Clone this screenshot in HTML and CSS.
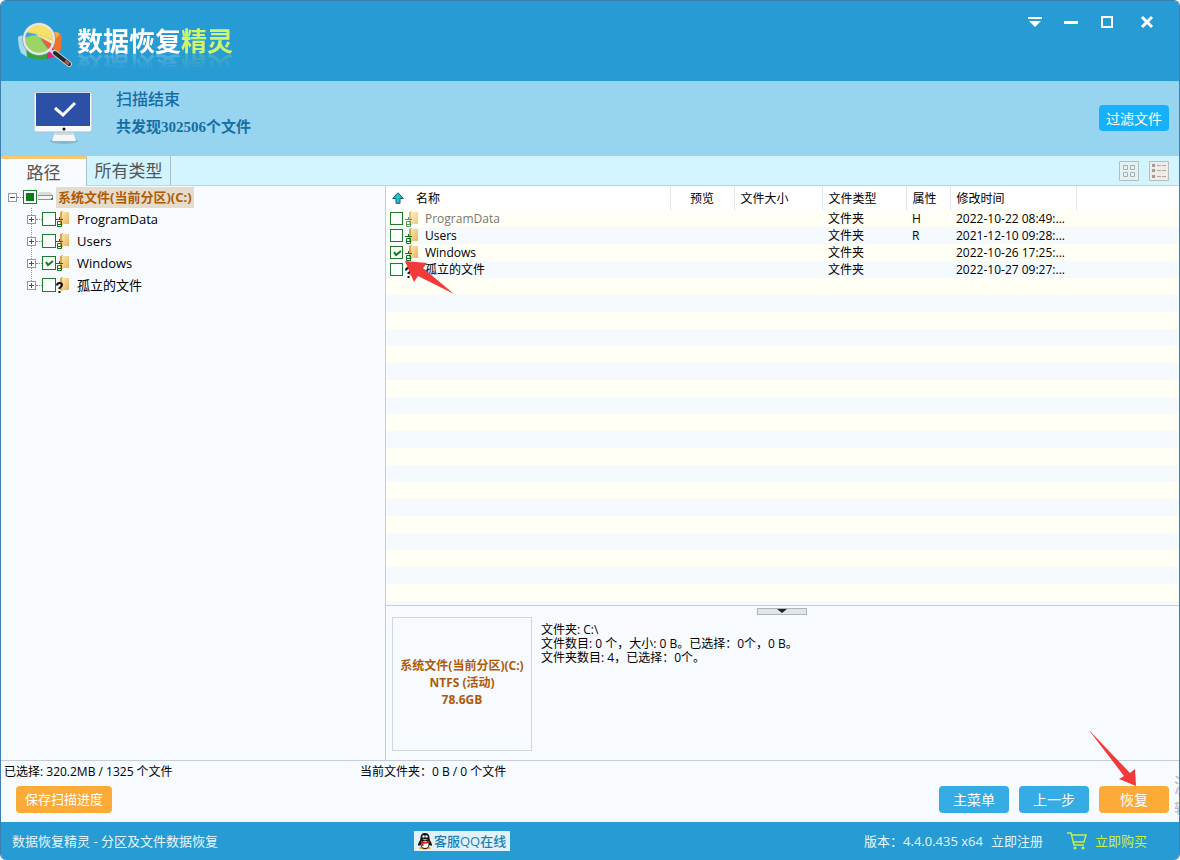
FILE: index.html
```html
<!DOCTYPE html>
<html lang="zh-CN">
<head>
<meta charset="utf-8">
<title>数据恢复精灵</title>
<link rel="stylesheet" href="styles.css">
</head>
<body>
<svg class="defs" aria-hidden="true">
  <defs>
    <linearGradient id="fold" x1="0" y1="0" x2="1" y2="1"><stop offset="0" stop-color="#fbe6b0"/><stop offset="1" stop-color="#e9b45c"/></linearGradient>
    <symbol id="folder-bin" viewBox="0 0 16 18">
      <path d="M4 2l3-1v14l-3-1z" fill="#d9a648"/><path d="M6 2h7v12H6z" fill="url(#fold)"/>
      <path d="M0 9.500h7M3.500 7v2M1.500 11.500h4v5h-4zM2 14.500h3" fill="none" stroke="#0c7420"/>
    </symbol>
    <symbol id="folder-unknown" viewBox="0 0 16 18">
      <path d="M4 2l3-1v14l-3-1z" fill="#d9a648"/><path d="M6 2h7v12H6z" fill="url(#fold)"/>
      <path d="M1 9.500q0-2.500 2.500-2.500t2.500 2q0 1.500-2.500 3v1" fill="none" stroke="#111" stroke-width="2"/><path d="M2.500 15h2v2h-2z" fill="#111"/>
    </symbol>
  </defs>
</svg>
<div class="window">
  <header class="titlebar">
    <div class="brand">
      <svg class="brand-icon" width="58" height="50" viewBox="0 0 58 50" aria-hidden="true">
        <path d="M2 17q1 12 5 17 9 7 22 5 12-2 15-8V22z" fill="#35a53a"/>
        <path d="M2 17q0 9 3 16l6 4-2-20q-4-3-7 0z" fill="#a9d9ee"/>
        <path d="M44 14l2 2-1 14-7 6-5-14z" fill="#ef7424"/>
        <path d="M44 14l-8 9-2-11q8-1 10 2z" fill="#f7a545"/>
        <path d="M31 26v13l9-3-3-8z" fill="#e2267d"/>
        <path d="M10 12q7-9 17-7 9 3 10 15L20 14z" fill="#f7dc51"/>
        <path d="M9 18q6-3 12-3l12 15-3 3q-12 4-18-3z" fill="#8fcf50"/>
        <path d="M20 14l16 6 1 3-4 4z" fill="#f6e98b"/>
        <path d="M24 17l12 7-3 6z" fill="#e34a33"/>
        <circle cx="23" cy="19" r="15" fill="#fff" fill-opacity=".12" stroke="#e4e8ea" stroke-width="2.500"/>
        <circle cx="23" cy="19" r="16.500" fill="none" stroke="#7a919d" stroke-width=".6"/>
        <path d="M34 30l5 4" stroke="#d6d6d6" stroke-width="3"/>
        <path d="M39 33l14 11" stroke="#c9cdd0" stroke-width="6" stroke-linecap="round"/>
        <path d="M39 33l14 11" stroke="#26272a" stroke-width="4" stroke-linecap="round"/>
        <path d="M49 41l4 3" stroke="#a05b42" stroke-width="3"/>
      </svg>
      <h1 class="brand-name">数据恢复<span class="brand-accent">精灵</span></h1>
    </div>
    <div class="window-controls">
      <button type="button" aria-label="菜单"><svg width="16" height="16" viewBox="0 0 16 16"><path d="M1 3h14v2H1zM2 7h12l-6 6z" fill="#fff"/></svg></button>
      <button type="button" aria-label="最小化"><svg width="16" height="16" viewBox="0 0 16 16"><path d="M1 7h14v3H1z" fill="#fff"/></svg></button>
      <button type="button" aria-label="最大化"><svg width="16" height="16" viewBox="0 0 16 16"><path d="M3 3h10v10H3z" fill="none" stroke="#fff" stroke-width="2"/></svg></button>
      <button type="button" class="close" aria-label="关闭"><svg width="16" height="16" viewBox="0 0 16 16"><path d="M3 3l10 10M13 3L3 13" stroke="#fff" stroke-width="3"/></svg></button>
    </div>
  </header>

  <section class="banner">
    <svg class="monitor" width="60" height="54" viewBox="0 0 60 54" aria-hidden="true">
      <ellipse cx="31" cy="50" rx="14" ry="3" fill="#7fb9d6"/>
      <path d="M22 41h18l3 9H19z" fill="#f7f7f8"/><path d="M22 41h18l1 3H21z" fill="#d4d8de"/>
      <rect x="1" y="1" width="58" height="40" rx="2" fill="#f6f8fa" stroke="#a9c0d4"/>
      <path d="M3 2h54v33H3z" fill="#2b50a5"/>
      <path d="M22 17l8 7 12-12" fill="none" stroke="#fff" stroke-width="3"/>
      <circle cx="31" cy="38" r="1.500" fill="#111"/>
    </svg>
    <div class="banner-text">
      <p class="banner-title">扫描结束</p>
      <p class="banner-count">共发现302506个文件</p>
    </div>
    <button type="button" class="btn btn-filter">过滤文件</button>
  </section>

  <nav class="tabs">
    <button type="button" class="tab tab-active">路径</button>
    <button type="button" class="tab">所有类型</button>
    <div class="view-modes">
      <button type="button" aria-label="图标视图"><svg width="20" height="20" viewBox="0 0 20 20"><path d="M.5.5h19v19H.5z" fill="#e4f1f2" stroke="#aebfc2"/><path d="M4.500 4.500h4v4h-4zM11.500 4.500h4v4h-4zM4.500 11.500h4v4h-4zM11.500 11.500h4v4h-4z" fill="none" stroke="#a3b1b3"/></svg></button>
      <button type="button" aria-label="列表视图"><svg width="20" height="20" viewBox="0 0 20 20"><path d="M.5.5h19v19H.5z" fill="#eeebe9" stroke="#b8bcbc"/><path d="M3 3h3v3H3zM3 8h3v3H3zM3 14h3v3H3z" fill="#a39b96"/><path d="M8 4.500h9M8 9.500h9M8 15.500h9" stroke="#b5a59d" stroke-dasharray="4 1"/></svg></button>
    </div>
  </nav>

  <main class="workspace">
    <aside class="tree">
      <div class="tree-root">
        <button type="button" class="toggle toggle-open" aria-label="折叠"></button>
        <span class="dots"></span>
        <input type="checkbox" class="check check-partial" id="t0">
        <svg class="drive" width="17" height="14" viewBox="0 0 17 14" aria-hidden="true"><path d="M3 2h10l3 3H1z" fill="#d9dcdc"/><path d="M1 5h15v5H1z" fill="#8d9292"/><path d="M1 6h14v3H1z" fill="#f3f4f4"/><path d="M14 8h2v2h-2z" fill="#279436"/></svg>
        <label for="t0" class="root-label">系统文件(当前分区)(C:)</label>
      </div>
      <ul class="tree-list">
        <li><button type="button" class="toggle" aria-label="展开"></button><span class="dots"></span><input type="checkbox" class="check" id="t1"><svg class="folder" width="16" height="18"><use href="#folder-bin"/></svg><label for="t1">ProgramData</label></li>
        <li><button type="button" class="toggle" aria-label="展开"></button><span class="dots"></span><input type="checkbox" class="check" id="t2"><svg class="folder" width="16" height="18"><use href="#folder-bin"/></svg><label for="t2">Users</label></li>
        <li><button type="button" class="toggle" aria-label="展开"></button><span class="dots"></span><input type="checkbox" class="check" id="t3" checked><svg class="folder" width="16" height="18"><use href="#folder-bin"/></svg><label for="t3">Windows</label></li>
        <li><button type="button" class="toggle" aria-label="展开"></button><span class="dots"></span><input type="checkbox" class="check" id="t4"><svg class="folder" width="16" height="18"><use href="#folder-unknown"/></svg><label for="t4">孤立的文件</label></li>
      </ul>
    </aside>

    <section class="content">
      <div class="files">
        <table class="file-table">
          <colgroup><col><col class="c-preview"><col class="c-size"><col class="c-type"><col class="c-attr"><col class="c-date"><col class="c-rest"></colgroup>
          <thead>
            <tr>
              <th><span class="name-head"><svg width="12" height="12" viewBox="0 0 12 12" aria-hidden="true"><path d="M6 .8L11.300 6.500H8v4.800H4V6.500H.7z" fill="#27c0cf" stroke="#125b78"/></svg>名称</span></th>
              <th class="center">预览</th><th>文件大小</th><th>文件类型</th><th>属性</th><th>修改时间</th><th class="last"></th>
            </tr>
          </thead>
          <tbody>
            <tr><td><span class="name"><input type="checkbox" class="check" id="f1"><svg class="faded" width="16" height="18"><use href="#folder-bin"/></svg><label for="f1" class="hidden-file">ProgramData</label></span></td><td></td><td></td><td>文件夹</td><td>H</td><td>2022-10-22 08:49:...</td><td></td></tr>
            <tr><td><span class="name"><input type="checkbox" class="check" id="f2"><svg width="16" height="18"><use href="#folder-bin"/></svg><label for="f2">Users</label></span></td><td></td><td></td><td>文件夹</td><td>R</td><td>2021-12-10 09:28:...</td><td></td></tr>
            <tr><td><span class="name"><input type="checkbox" class="check" id="f3" checked><svg width="16" height="18"><use href="#folder-bin"/></svg><label for="f3">Windows</label></span></td><td></td><td></td><td>文件夹</td><td></td><td>2022-10-26 17:25:...</td><td></td></tr>
            <tr><td><span class="name"><input type="checkbox" class="check" id="f4"><svg width="16" height="18"><use href="#folder-unknown"/></svg><label for="f4">孤立的文件</label></span></td><td></td><td></td><td>文件夹</td><td></td><td>2022-10-27 09:27:...</td><td></td></tr>
          </tbody>
        </table>
        <svg class="pointer pointer-row" width="51" height="35" viewBox="0 0 51 35" aria-hidden="true"><path d="M0 0l22 2-4 5 31 26-36-18-4 6z" fill="#f4393b"/></svg>
      </div>
      <div class="details">
        <button type="button" class="collapse" aria-label="收起"><svg width="10" height="5" viewBox="0 0 10 5"><path d="M0 0h10L5 4z" fill="#222"/></svg></button>
        <div class="volume">
          <p>系统文件(当前分区)(C:)</p>
          <p>NTFS (活动)</p>
          <p>78.6GB</p>
        </div>
        <div class="summary">
          <p>文件夹: C:\</p>
          <p>文件数目: 0 个，大小: 0 B。已选择：0个，0 B。</p>
          <p>文件夹数目: 4，已选择：0个。</p>
        </div>
      </div>
    </section>
  </main>

  <div class="status">
    <p class="status-selected">已选择: 320.2MB / 1325 个文件</p>
    <p>当前文件夹：0 B / 0 个文件</p>
  </div>
  <div class="actions">
    <button type="button" class="btn btn-save">保存扫描进度</button>
    <button type="button" class="btn btn-blue">主菜单</button>
    <button type="button" class="btn btn-blue">上一步</button>
    <button type="button" class="btn btn-orange">恢复</button>
    <svg class="pointer pointer-recover" width="50" height="59" viewBox="0 0 50 59" aria-hidden="true"><path d="M0 0l42 44 5-4 1 17-17-7 5-3z" fill="#f4393b"/></svg>
    <div class="edge-mark"><p class="edge-title">激</p><p class="edge-sub">转</p></div>
  </div>

  <footer class="footer">
    <p class="footer-name">数据恢复精灵 - 分区及文件数据恢复</p>
    <a href="#" class="qq">
      <svg width="16" height="18" viewBox="0 0 16 18" aria-hidden="true"><ellipse cx="8" cy="16" rx="6" ry="1.500" fill="#e9a12a"/><path d="M8 1q4.500 0 4.500 5 0 2 2 5 1 2 0 3l-2-1q-1 4-4.500 4T3.500 13l-2 1q-1-1 0-3 2-3 2-5 0-5 4.500-5z" fill="#161616"/><ellipse cx="8" cy="12.500" rx="3.500" ry="3.500" fill="#fff"/><circle cx="6.500" cy="4.500" r="1.200" fill="#fff"/><circle cx="9.500" cy="4.500" r="1.200" fill="#fff"/><path d="M5 7h6l-3 1.500z" fill="#f0a928"/><path d="M3.500 8.500q4.500 2.500 9 0v2q-3 1.500-6 1.300V14h-2v-3z" fill="#d8221f"/></svg>
      客服QQ在线
    </a>
    <p class="version">版本：4.4.0.435 x64</p>
    <a href="#" class="register">立即注册</a>
    <a href="#" class="buy">
      <svg width="20" height="18" viewBox="0 0 20 18" aria-hidden="true"><path d="M0 1h4l3 12h10M5 3h14l-2 7H6.500" fill="none" stroke="#c5ee4f" stroke-width="1.500"/><circle cx="8" cy="16" r="1.500" fill="#c5ee4f"/><circle cx="16" cy="16" r="1.500" fill="#c5ee4f"/></svg>
      立即购买
    </a>
  </footer>
</div>
</body>
</html>
```
FILE: styles.css
```css
* { box-sizing: border-box; }
body {
  margin: 0;
  background: #fff;
  color: #000;
  font: 12px/17px "Open Sans", "Noto Sans CJK SC", sans-serif;
}
p, h1, ul { margin: 0; padding: 0; }
button { margin: 0; padding: 0; border: 0; background: none; color: inherit; font: inherit; }
a { color: inherit; text-decoration: none; }
svg { display: block; flex: none; }
.defs { position: absolute; width: 0; height: 0; }

.window {
  display: flex;
  flex-direction: column;
  min-height: 100vh;
  overflow: hidden;
  border: 1px solid #3d7fae;
  border-bottom: 0;
  border-radius: 6px;
  background: #f7fbff;
}

.titlebar {
  display: flex;
  justify-content: space-between;
  align-items: flex-start;
  height: 80px;
  background: #279bd3;
}
.brand { display: flex; align-items: center; gap: 3px; padding: 19px 0 0 15px; }
.brand-name {
  margin-bottom: 8px;
  color: #fff;
  font-size: 26px;
  font-weight: 700;
  line-height: 32px;
  -webkit-box-reflect: below -6px linear-gradient(transparent 40%, rgba(0, 0, 0, .25));
}
.brand-accent { color: #cff56a; }
.window-controls { display: flex; padding: 13px 24px 0 0; gap: 20px; }
.window-controls .close { margin-left: 4px; }

.banner { display: flex; height: 75px; padding: 10px 10px 0 32px; background: #97d4ef; }
.banner-text { padding: 1px 0 0 23px; color: #146ea5; font-family: "Liberation Serif", "Noto Sans CJK SC", serif; font-weight: 500; }
.banner-title { font-size: 16px; line-height: 16px; }
.banner-count { padding-top: 11px; font-size: 15px; line-height: 16px; font-weight: 700; }

.btn { height: 27px; border-radius: 4px; color: #fff; font-size: 14px; line-height: 25px; text-align: center; }
.btn-filter { width: 70px; height: 26px; margin: 14px 0 0 auto; background: #17b1fb; }

.tabs { display: flex; height: 30px; background: #d1f4ff; border-bottom: 1px solid #c3d3e2; }
.tab {
  width: 84px;
  border-right: 1px solid #a9bfc9;
  color: #555;
  font-size: 17px;
  line-height: 28px;
}
.tab-active { width: 86px; height: 30px; border-top: 3px solid #f5c777; background: #f7fbff; line-height: 24px; }
.view-modes { display: flex; align-items: flex-start; gap: 10px; margin-left: auto; padding: 5px 10px 0 0; }

.workspace { display: grid; flex: 1; grid-template-columns: 385fr 793fr; border-bottom: 1px solid #c4ced8; }
.tree { min-width: 0; border-right: 1px solid #c4ced8; padding-left: 7px; font-size: 13px; }
.tree-root, .tree-list li { display: flex; align-items: center; height: 22px; }
.tree-list { list-style: none; padding-left: 19px; background: repeating-linear-gradient(#8d959c 0 1px, transparent 1px 2px) 23px 0 / 1px 76px no-repeat; }
.toggle {
  flex: none;
  width: 9px;
  height: 9px;
  border: 1px solid #8f97a5;
  background:
    linear-gradient(#444f80, #444f80) center / 5px 1px no-repeat,
    linear-gradient(#444f80, #444f80) center / 1px 5px no-repeat,
    #fff;
}
.toggle-open { background: linear-gradient(#444f80, #444f80) center / 5px 1px no-repeat, #fff; }
.dots { width: 6px; border-top: 1px dotted #888; }
.check {
  appearance: none;
  flex: none;
  width: 14px;
  height: 14px;
  margin: 0;
  border: 1px solid #1f7a2b;
  background: #f9fffa;
}
.check:checked { background: #f9fffa url("data:image/svg+xml,%3Csvg xmlns='http://www.w3.org/2000/svg' viewBox='0 0 12 12'%3E%3Cpath d='M3 5l2 3 5-4' fill='none' stroke='%23137a20' stroke-width='2'/%3E%3C/svg%3E") center / 12px no-repeat; }
.check-partial { background: linear-gradient(#0b7a18, #0b7a18) center / 8px 8px no-repeat, #fff; }
.drive { margin-right: 2px; }
.root-label { padding: 0 2px; background: #e6dccb; color: #b05a08; font-weight: 700; line-height: 21px; }
.folder { margin: 0 5px 0 0; }

.content { display: flex; flex-direction: column; min-width: 0; }
.files {
  position: relative;
  flex: 1;
  border-bottom: 1px solid #c4ced8;
  background: repeating-linear-gradient(#fffff5 0 17px, #f5faff 17px 34px) 0 24px no-repeat;
}
.file-table { width: 100%; border-collapse: collapse; table-layout: fixed; }
.c-preview { width: 64px; }
.c-size { width: 88px; }
.c-type { width: 84px; }
.c-attr { width: 44px; }
.c-date { width: 126px; }
.c-rest { width: 103px; }
.file-table th { height: 24px; padding: 0 6px; border-right: 1px solid #e2e6ea; background: #fff; font-weight: 400; text-align: left; }
.file-table th.center { text-align: center; }
.file-table th.last { border-right: 0; }
.file-table td { height: 17px; padding: 0 6px; white-space: nowrap; }
.file-table th:first-child, .file-table td:first-child { padding-left: 4px; }
.name-head { display: flex; align-items: center; gap: 12px; padding-left: 2px; }
.name { display: flex; align-items: center; height: 17px; }
.name .check { width: 13px; height: 13px; }
.name svg { margin-left: 2px; }
.name label { padding-left: 4px; }
.faded { opacity: .7; }
.hidden-file { color: #777; }

.pointer { position: absolute; }
.pointer-row { left: 19px; top: 75px; }

.details { position: relative; display: flex; gap: 9px; height: 154px; padding: 11px 6px 8px; }
.collapse {
  position: absolute;
  top: 2px;
  left: 50%;
  width: 50px;
  height: 7px;
  margin-left: -26px;
  border: 1px solid #aeb5bc;
  background: #e2e5e8;
}
.collapse svg { margin: 0 auto; }
.volume {
  display: flex;
  flex-direction: column;
  justify-content: center;
  width: 140px;
  height: 134px;
  padding-bottom: 3px;
  border: 1px solid #d0d6dc;
  color: #b05a08;
  font-weight: 700;
  text-align: center;
  white-space: nowrap;
}
.summary { padding-top: 6px; line-height: 14px; }

.status { display: flex; padding: 2px 3px; height: 25px; }
.status-selected { flex: 0 0 356px; }
.actions { position: relative; display: flex; gap: 10px; height: 36px; padding: 0 10px 0 15px; }
.btn-save { width: 96px; margin-right: auto; background: #fcaa38; font-size: 13px; }
.btn-blue { width: 70px; background: #35ace3; }
.btn-orange { width: 70px; background: #fcaa38; }
.pointer-recover { right: 41px; top: -57px; }
.edge-mark {
  position: absolute;
  top: -12px;
  right: 0;
  width: 5px;
  overflow: hidden;
  color: #b4bac2;
}
.edge-title { font-size: 20px; line-height: 24px; }
.edge-sub { font-size: 14px; line-height: 20px; }

.footer { display: flex; align-items: center; height: 38px; padding: 0 32px 0 11px; background: #279bd3; color: #e6f6ff; font-size: 13px; }
.footer-name { flex: 0 0 402px; }
.qq { display: flex; align-items: center; gap: 1px; height: 20px; padding: 0 4px 0 3px; background: #e1f2fb; color: #1e7fb8; font-weight: 500; }
.version { margin-left: auto; }
.register { margin-left: 8px; }
.buy { display: flex; align-items: center; gap: 8px; margin-left: 24px; color: #c9f23d; }
```
